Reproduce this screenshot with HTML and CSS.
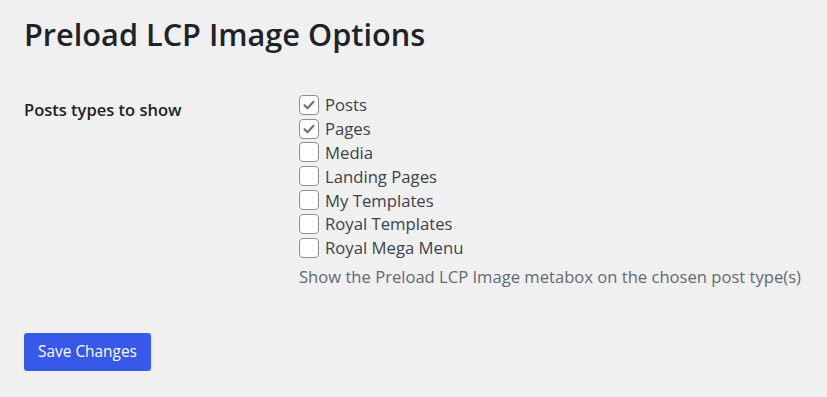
FILE: index.html
```html
<!DOCTYPE html>
<html lang="en">
<head>
<meta charset="utf-8">
<title>Preload LCP Image Options</title>
<link rel="stylesheet" href="styles.css">
</head>
<body>
<div class="wrap">
  <h1 class="title">Preload LCP Image Options</h1>
  <form class="form">
    <div class="row">
      <div class="label">Posts types to show</div>
      <div class="field">
        <label class="opt"><span class="box checked"><svg viewBox="0 0 20 20" width="20" height="20"><path d="M5 10.2l3.3 3.4L15 6.5" fill="none" stroke="#6b7280" stroke-width="2.4" stroke-linecap="round" stroke-linejoin="round"/></svg></span>Posts</label>
        <label class="opt"><span class="box checked"><svg viewBox="0 0 20 20" width="20" height="20"><path d="M5 10.2l3.3 3.4L15 6.5" fill="none" stroke="#6b7280" stroke-width="2.4" stroke-linecap="round" stroke-linejoin="round"/></svg></span>Pages</label>
        <label class="opt"><span class="box"></span>Media</label>
        <label class="opt"><span class="box"></span>Landing Pages</label>
        <label class="opt"><span class="box"></span>My Templates</label>
        <label class="opt"><span class="box"></span>Royal Templates</label>
        <label class="opt"><span class="box"></span>Royal Mega Menu</label>
        <p class="desc">Show the Preload LCP Image metabox on the chosen post type(s)</p>
      </div>
    </div>
    <button type="button" class="btn">Save Changes</button>
  </form>
</div>
</body>
</html>
```

FILE: styles.css
```css
html, body {
  margin: 0;
  padding: 0;
  background: #f0f0f1;
}
body {
  font-family: "Open Sans", "Noto Sans", sans-serif;
  color: #1d2327;
}
.wrap {
  padding: 14px 24px 0 24px;
}
.title {
  margin: 0;
  font-size: 30.7px;
  font-weight: 600;
  line-height: 40px;
  color: #1d2327;
}
.form {
  margin-top: 38px;
}
.row {
  display: flex;
}
.label {
  width: 275px;
  flex: none;
  font-size: 16.5px;
  font-weight: 600;
  line-height: 22px;
  padding-top: 7px;
}
.field {
  display: flex;
  flex-direction: column;
  margin-top: 1px;
}
.opt {
  display: flex;
  align-items: center;
  height: 23.8px;
  font-size: 16.7px;
  color: #3c434a;
}
.box {
  width: 18px;
  height: 18px;
  border: 1px solid #8c8f94;
  border-radius: 4px;
  background: #fff;
  margin-right: 6px;
  display: flex;
  align-items: center;
  justify-content: center;
  box-sizing: content-box;
}
.box svg {
  width: 18px;
  height: 18px;
}
.desc {
  margin: 6px 0 0 0;
  font-size: 16.6px;
  color: #646970;
  line-height: 22px;
}
.btn {
  margin-top: 45px;
  width: 127px;
  height: 38px;
  background: #3858e9;
  border: none;
  border-radius: 3px;
  color: #fff;
  font-family: "Open Sans", "Noto Sans", sans-serif;
  font-size: 15.4px;
  padding: 0;
  cursor: pointer;
}
```
